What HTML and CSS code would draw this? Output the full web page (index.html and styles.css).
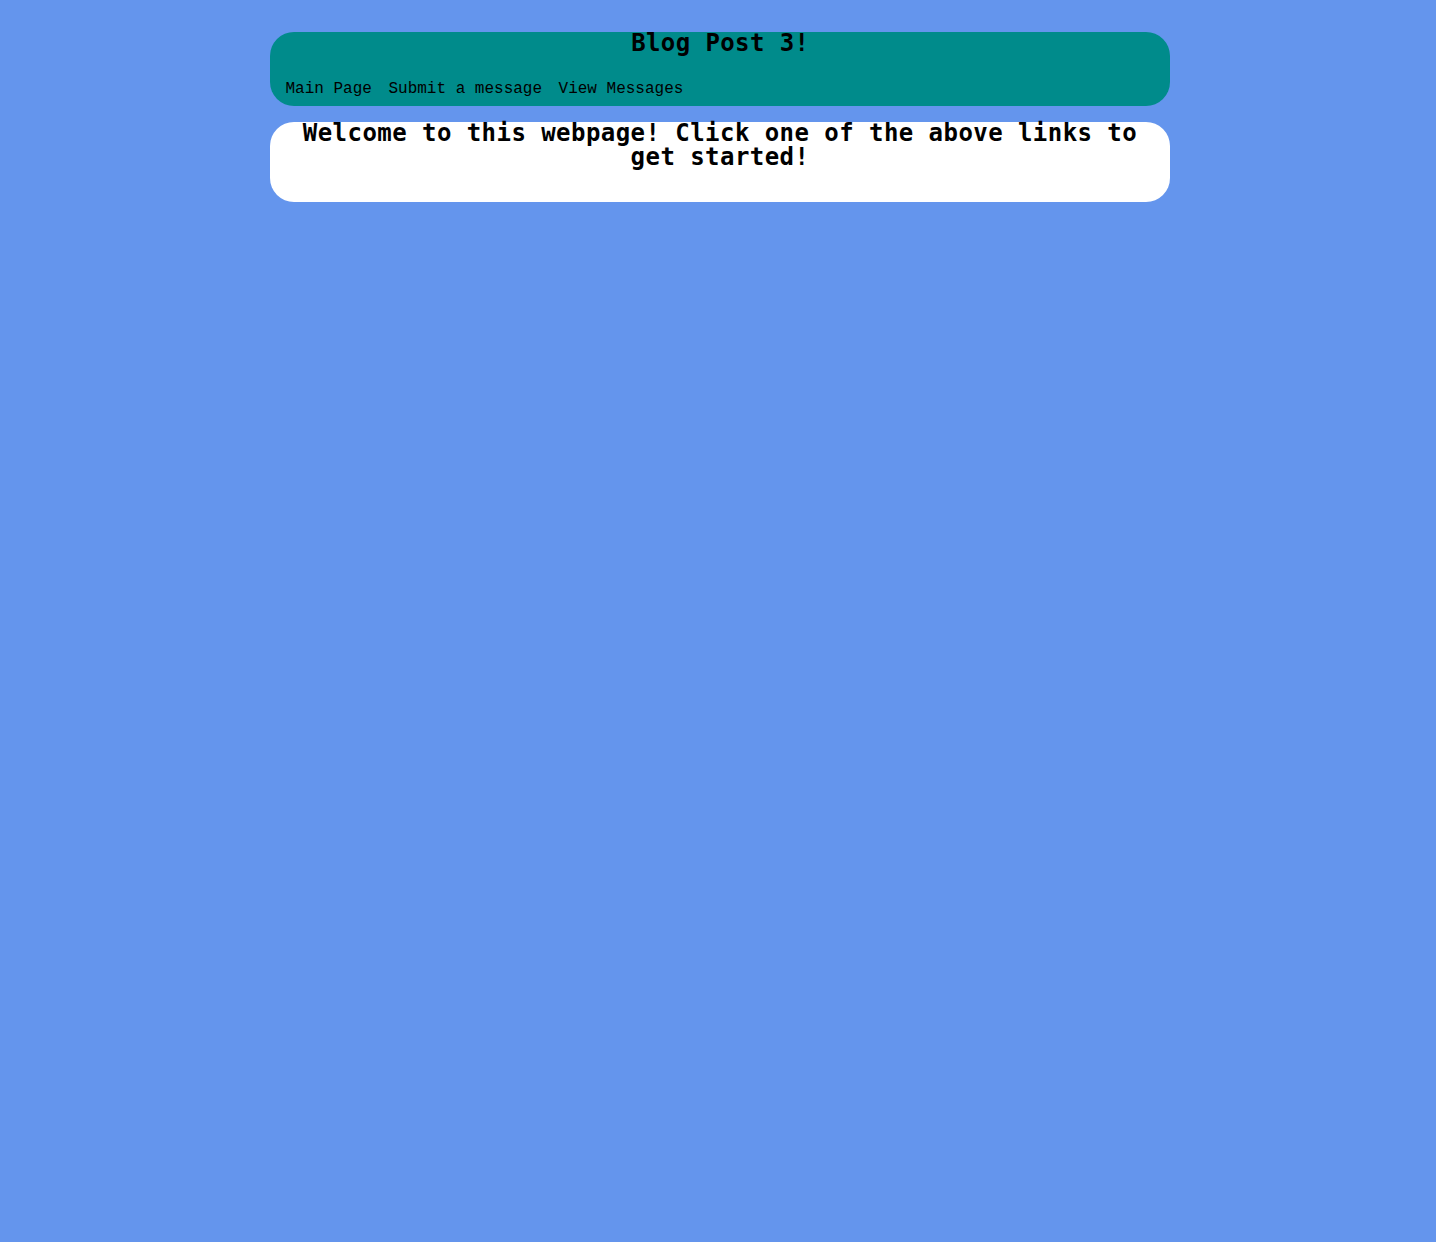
FILE: index.html
```html
<!DOCTYPE html>
<html>
<head>
<meta charset="utf-8">
<title>Blog Post 3!</title>
<link rel="stylesheet" href="styles.css">
</head>
<body>
<div class="page">
  <header class="header">
    <h1 class="title">Blog Post 3!</h1>
    <nav class="nav">
      <a class="nav-link" href="#">Main Page</a>
      <a class="nav-link" href="#">Submit a message</a>
      <a class="nav-link" href="#">View Messages</a>
    </nav>
  </header>
  <main class="content">
    <h2 class="welcome">Welcome to this webpage! Click one of the above links to get started!</h2>
  </main>
</div>
</body>
</html>
```

FILE: styles.css
```css
html, body {
  margin: 0;
  padding: 0;
  background: #6495ED;
}
body {
  padding-left: 4px;
}
.page {
  width: 900px;
  margin: 0 auto;
  padding-top: 32px;
  display: flex;
  flex-direction: column;
  gap: 16px;
}
.header {
  background: #008B8B;
  border-radius: 24px;
  padding: 0 15px 8px 15.5px;
}
.title {
  margin: 0;
  font-family: "DejaVu Sans Mono", monospace;
  font-weight: bold;
  font-size: 24px;
  line-height: 22px;
  letter-spacing: 0.4px;
  text-align: center;
  color: #000;
}
.nav {
  margin-top: 26px;
  display: flex;
  gap: 16.5px;
}
.nav-link {
  font-family: "Liberation Mono", "Courier New", monospace;
  font-size: 16px;
  line-height: 18px;
  color: #000;
  text-decoration: none;
}
.content {
  background: #fff;
  border-radius: 24px;
  padding: 0 20px 33px;
}
.welcome {
  margin: -1px 0 0;
  font-family: "DejaVu Sans Mono", monospace;
  font-weight: bold;
  font-size: 24px;
  line-height: 24px;
  letter-spacing: 0.45px;
  text-align: center;
  color: #000;
}
```
